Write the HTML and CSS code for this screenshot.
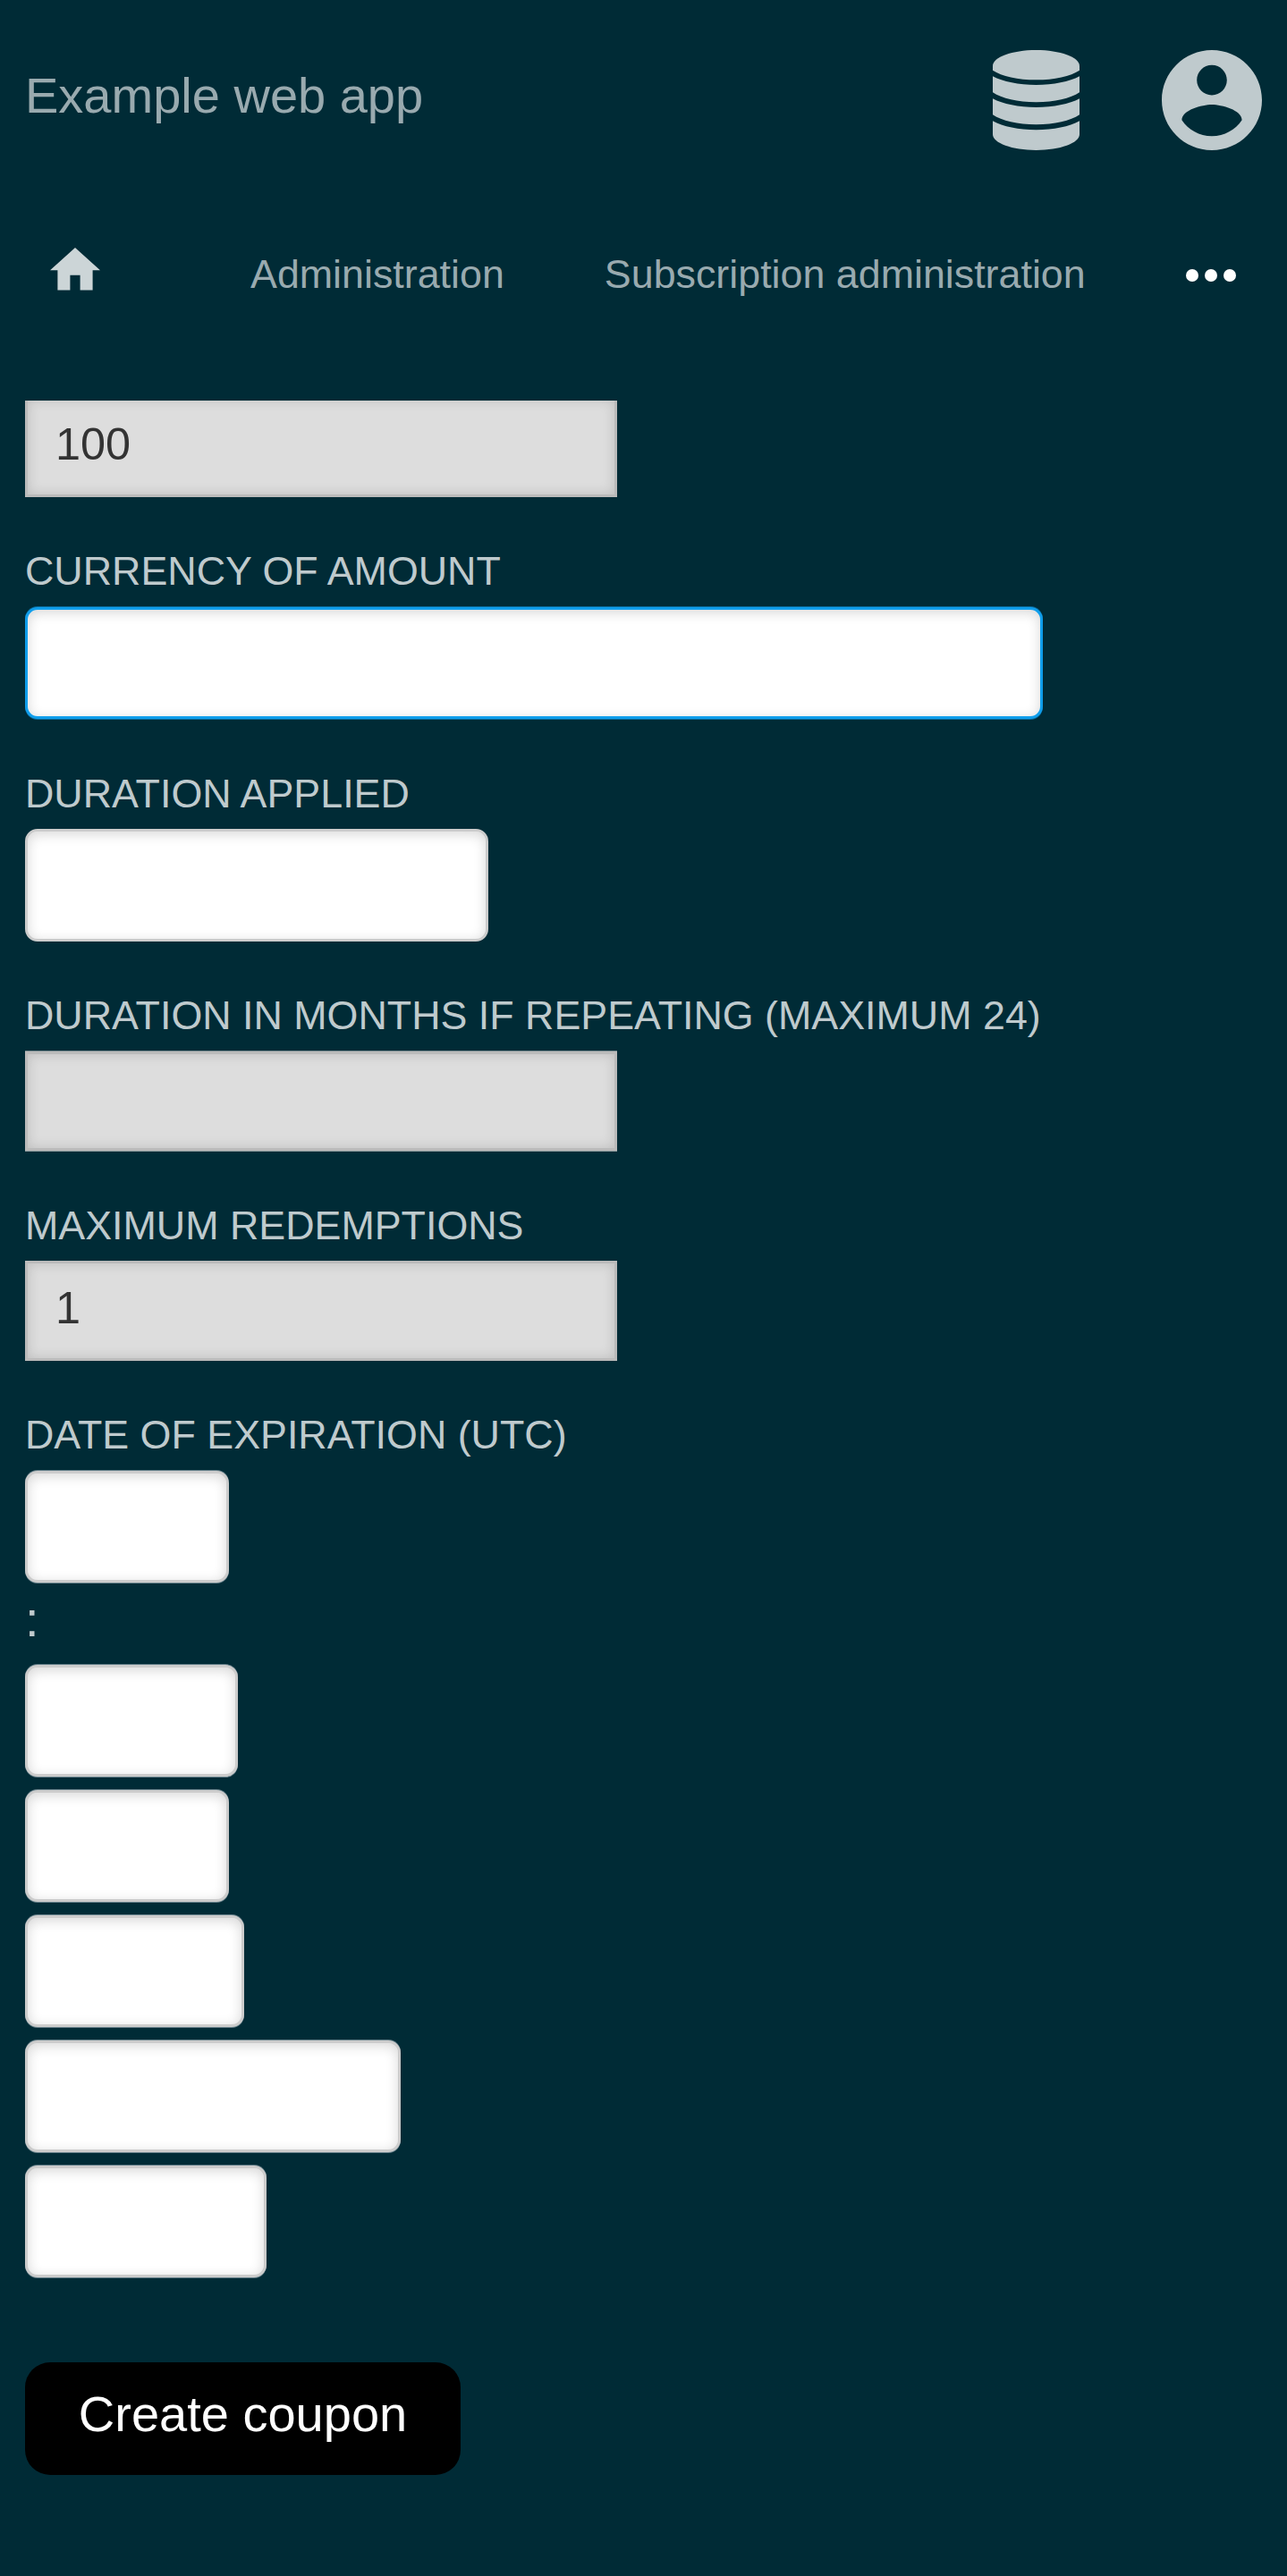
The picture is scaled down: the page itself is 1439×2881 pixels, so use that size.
FILE: index.html
```html
<!DOCTYPE html>
<html lang="en">
<head>
<meta charset="utf-8">
<title>Example web app</title>
<link rel="stylesheet" href="styles.css">
</head>
<body>
<header class="header">
  <a class="title">Example web app</a>
  <div class="tools">
    <svg class="icon-data" viewBox="150 107 291 336">
      <path d="M150 160C150 131 215 107 295.500 107S441 131 441 160V175C411 195 357 207 295.500 207S180 195 150 175Z"/>
      <path d="M150 195C184 213 237 224 295.500 224S407 213 441 195V249C411 269 357 282 295.500 282S180 269 150 249Z"/>
      <path d="M150 270C184 288 237 299 295.500 299S407 288 441 270V324C411 344 357 357 295.500 357S180 344 150 324Z"/>
      <path d="M150 345C184 364 237 375 295.500 375S407 364 441 345V390C441 419 376 443 295.500 443S150 419 150 390Z"/>
    </svg>
    <svg class="icon-user" viewBox="2 2 20 20">
      <path d="M12 2C6.480 2 2 6.480 2 12s4.480 10 10 10 10-4.480 10-10S17.520 2 12 2zm0 3c1.660 0 3 1.340 3 3s-1.340 3-3 3-3-1.340-3-3 1.340-3 3-3zm0 14.200c-2.500 0-4.710-1.280-6-3.220.030-1.990 4-3.080 6-3.080 1.990 0 5.970 1.090 6 3.080-1.290 1.940-3.500 3.220-6 3.220z"/>
    </svg>
  </div>
</header>
<nav class="nav">
  <svg class="icon-home" viewBox="2 3 20 17"><path d="M10 20v-6h4v6h5v-8h3L12 3 2 12h3v8z"/></svg>
  <a class="nav-link">Administration</a>
  <a class="nav-link">Subscription administration</a>
  <svg class="icon-more" viewBox="0 0 56 14"><circle cx="7" cy="7" r="7"/><circle cx="28" cy="7" r="7"/><circle cx="49" cy="7" r="7"/></svg>
</nav>
<main class="content">
  <form>
    <div class="scrolled"><input class="text-input" type="text" value="100"></div>
    <div class="field">
      <label class="label raised">CURRENCY OF AMOUNT</label>
      <select class="select focused currency"></select>
    </div>
    <div class="field">
      <label class="label">DURATION APPLIED</label>
      <select class="select crisp duration"></select>
    </div>
    <div class="field">
      <label class="label raised">DURATION IN MONTHS IF REPEATING (MAXIMUM 24)</label>
      <input class="text-input edged" type="text">
    </div>
    <div class="field">
      <label class="label">MAXIMUM REDEMPTIONS</label>
      <input class="text-input" type="text" value="1">
    </div>
    <div class="field">
      <label class="label raised">DATE OF EXPIRATION (UTC)</label>
      <select class="select hour"></select>
      <div class="colon">:</div>
      <div class="date-parts">
        <select class="select minute"></select>
        <select class="select meridiem"></select>
        <select class="select day"></select>
        <select class="select month"></select>
        <select class="select year"></select>
      </div>
    </div>
    <button class="submit" type="button">Create coupon</button>
  </form>
</main>
</body>
</html>
```
FILE: styles.css
```css
* { box-sizing: border-box; }
body {
  margin: 0;
  min-height: 2881px;
  background: #002b36;
  color: #bfcacd;
  font-family: "Liberation Sans", Arial, sans-serif;
}
svg { display: block; flex: none; }
.header {
  display: flex;
  justify-content: space-between;
  align-items: flex-start;
  height: 224px;
  padding: 55.700px 28px 0;
}
.title { font-size: 56px; line-height: 101px; color: #99aaaf; }
.tools { display: flex; gap: 92px; fill: #bfcacd; }
.icon-data { width: 97px; height: 112px; }
.icon-user { width: 112px; height: 112px; }
.nav {
  display: flex;
  align-items: flex-start;
  gap: 112px;
  height: 224px;
  padding: 53px 56px 0;
}
.icon-home { width: 56px; height: 47.600px; margin-right: 56px; fill: #ccd5d7; }
.nav-link { font-size: 44.800px; line-height: 59px; color: #99aaaf; white-space: nowrap; }
.icon-more { width: 56px; height: 14px; margin: 24px 0 0 .5px; fill: #fff; }
.content { padding: 0 28px; }
.scrolled { height: 108px; overflow: hidden; }
.scrolled .text-input { margin-top: -4px; }
.text-input {
  display: block;
  width: 662px;
  height: 112px;
  margin: 0;
  padding: 0 31px 7px;
  border: 3px solid #bbb;
  border-radius: 0;
  outline: 0;
  background: #ddd;
  color: #333;
  font: 50.400px "Liberation Sans", Arial, sans-serif;
  box-shadow: inset 0 0 14px rgba(0, 0, 0, .15);
}
.text-input.edged {
  height: 111px;
  box-shadow: inset 0 0 14px rgba(0, 0, 0, .15), 0 -1px 0 #839296, 0 1px 0 #839296;
}
.field { margin-top: 55px; }
.label {
  display: block;
  height: 68px;
  font-size: 44.800px;
  line-height: 56px;
  white-space: nowrap;
}
.label.raised { line-height: 54px; }
.select {
  display: block;
  appearance: none;
  height: 125px;
  margin: 0;
  padding: 0;
  border: 3px solid #ccc;
  border-radius: 14px;
  outline: 0;
  background: #fff;
  box-shadow: inset 0 3px 14px rgba(0, 0, 0, .16), 0 -1px 0 #66808a, 0 1px 0 #66808a;
}
.select.crisp { height: 126px; box-shadow: inset 0 3px 14px rgba(0, 0, 0, .16); }
.select.focused {
  border-color: #109eeb;
  box-shadow: inset 0 3px 14px rgba(0, 0, 0, .16), 0 -1px 0 #096591, 0 1px 0 #096591;
}
.currency { width: 1138px; }
.duration { width: 518px; }
.hour, .meridiem { width: 228px; }
.minute { width: 238px; }
.day { width: 245px; }
.month { width: 420px; }
.year { width: 270px; }
.colon { height: 92px; font-size: 56px; line-height: 81px; }
.date-parts { display: flex; flex-direction: column; gap: 15px; }
.submit {
  display: block;
  width: 487px;
  height: 126px;
  margin: 95px 0 0;
  padding: 0 0 12px;
  border: 0;
  border-radius: 28px;
  background: #000;
  color: #fff;
  font: 56px "Liberation Sans", Arial, sans-serif;
}
```
